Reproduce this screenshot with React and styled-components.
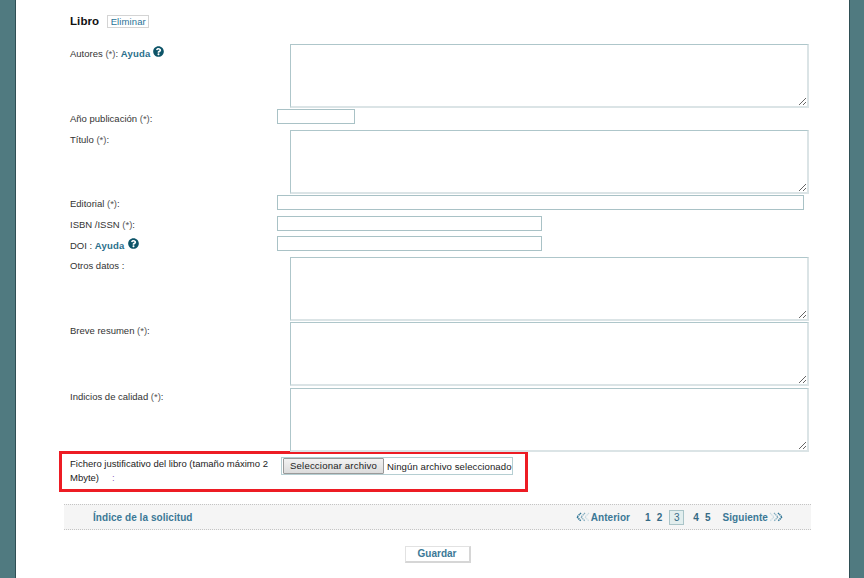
import React from "react";
import styled, { createGlobalStyle } from "styled-components";
import { FaQuestionCircle } from "react-icons/fa";

const Global = createGlobalStyle`
  html, body { margin: 0; padding: 0; height: 578px; overflow: hidden; background: #507a80; }
  body { font-family: "Liberation Sans", Arial, sans-serif; font-size: 10px; color: #333; }
  #root { height: 578px; }
`;

const Page = styled.div`
  box-sizing: border-box;
  width: 835px;
  height: 578px;
  margin-left: 15px;
  background: #fff;
  border-left: 1px solid #2f4f55;
  border-right: 1px solid #2f4f55;
  padding: 14px 38px 0 48px;
  overflow: hidden;
`;

const TitleRow = styled.div`
  display: flex;
  align-items: flex-start;
  gap: 8px;
  height: 30px;
  padding-left: 6px;
`;

const Title = styled.h2`
  margin: 0;
  font-size: 11.5px;
  line-height: 14px;
  font-weight: bold;
  letter-spacing: 0.1px;
  color: #111;
`;

const Remove = styled.button`
  box-sizing: border-box;
  height: 13px;
  width: 42px;
  margin-top: 1px;
  padding: 0;
  font: 9.5px/11px "Liberation Sans", Arial, sans-serif;
  letter-spacing: 0.1px;
  color: #2a7398;
  background: #fff;
  border: 1px solid #d4d4d4;
`;

const Row = styled.div`
  display: flex;
  align-items: flex-start;
  height: ${(p) => p.$h}px;
  padding-left: 6px;
`;

const Label = styled.label`
  box-sizing: border-box;
  flex: 0 0 207px;
  padding-top: ${(p) => p.$top ?? 3}px;
  font-size: 9.5px;
  line-height: 12px;
  color: #333;
`;

const Star = styled.span`
  color: #555;
`;

const Help = styled.a`
  font-weight: bold;
  color: #2a6f8c;
  letter-spacing: 0.2px;
  svg {
    width: 11px;
    height: 11px;
    margin-left: 3px;
    color: #0d5468;
    vertical-align: 0;
  }
`;

const Area = styled.textarea`
  box-sizing: border-box;
  display: block;
  width: 519px;
  height: 64px;
  margin: 0 0 0 13px;
  padding: 1px;
  background: #fff;
  border-style: solid;
  border-width: 1px 2px 2px 1px;
  border-color: #aec6ca #dbe4e6 #dbe4e6 #aec6ca;
  outline: none;
`;

const Field = styled.input`
  box-sizing: border-box;
  display: block;
  width: ${(p) => p.$w}px;
  height: 15px;
  margin: 0;
  padding: 0 1px;
  background: #fff;
  border: 1px solid #a9c2c6;
  outline: none;
`;

const FileRow = styled.div`
  box-sizing: border-box;
  display: flex;
  align-items: flex-start;
  width: 469px;
  height: 41px;
  margin-left: -5px;
  padding: 3px 0 0 8px;
  border: 3px solid #ed1c24;
`;

const FileLabel = styled.div`
  flex: 0 0 211px;
  box-sizing: border-box;
  padding-right: 8px;
  font-size: 9.5px;
  line-height: 14px;
  color: #222;
`;

const Colon = styled.span`
  margin-left: 13px;
  color: #8a5fc0;
`;

const FileBox = styled.div`
  box-sizing: border-box;
  display: flex;
  align-items: center;
  width: 232px;
  height: 18px;
  padding-left: 1px;
  white-space: nowrap;
  overflow: hidden;
  border: 1px solid #b5ced2;
`;

const FileButton = styled.button`
  box-sizing: border-box;
  flex: none;
  width: 101px;
  height: 16px;
  padding: 0;
  font: 9.6px/14px "Liberation Sans", Arial, sans-serif;
  letter-spacing: 0.17px;
  color: #222;
  background: linear-gradient(#f2f2f2, #dcdcdc);
  border: 1px solid #9a9a9a;
  border-radius: 1px;
`;

const FileName = styled.span`
  margin-left: 3px;
  font-size: 9.6px;
  letter-spacing: 0.07px;
  color: #222;
`;

const Bar = styled.nav`
  box-sizing: border-box;
  display: flex;
  align-items: center;
  justify-content: space-between;
  height: 26px;
  margin-top: 12px;
  padding: 0 28px 0 29px;
  background: #f5f5f5;
  border-top: 1px dotted #c4c4c4;
  border-bottom: 1px dotted #c4c4c4;
  font-size: 10px;
  font-weight: bold;
  letter-spacing: 0.05px;
  color: #3b7896;
`;

const Pager = styled.div`
  display: flex;
  align-items: center;
`;

const PagerLink = styled.a`
  display: flex;
  align-items: center;
  gap: 1px;
  margin: ${(p) => p.$m || "0"};
`;

const PageNum = styled.a`
  color: #356a85;
  margin: ${(p) => p.$m || "0"};
`;

const CurrentPage = styled.span`
  box-sizing: border-box;
  width: 15px;
  height: 15px;
  margin: 0 9px 0 7px;
  text-align: center;
  line-height: 14px;
  font-weight: normal;
  color: #356a85;
  background: #e2eeee;
  border: 1px solid #a9c4c8;
`;

const Actions = styled.div`
  display: flex;
  justify-content: center;
  margin-top: 16px;
`;

const Save = styled.button`
  box-sizing: border-box;
  width: 66px;
  height: 17px;
  padding: 0;
  font: bold 10px/14px "Liberation Sans", Arial, sans-serif;
  color: #3b7896;
  background: #fff;
  border: 1px solid #e2e2e2;
  border-bottom: 2px solid #d6d6d6;
  border-right: 2px solid #d6d6d6;
`;

const Chevrons = ({ flip }) => (
  <svg width="14" height="10" viewBox="0 0 14 10" style={{ transform: flip ? "scaleX(-1)" : "none" }}>
    <path d="M5 1 1 5l4 4" fill="none" stroke="#2f7595" strokeWidth="1.5" strokeDasharray="1.4 .5" />
    <path d="M9 1 5 5l4 4" fill="none" stroke="#7fa9bc" strokeWidth="1.3" strokeDasharray="1.4 .5" />
    <path d="M13 1 9 5l4 4" fill="none" stroke="#c6dae2" strokeWidth="1.2" strokeDasharray="1.4 .5" />
  </svg>
);

const req = <Star>(*)</Star>;

export default function App() {
  return (
    <>
      <Global />
      <Page>
        <TitleRow>
          <Title>Libro</Title>
          <Remove type="button">Eliminar</Remove>
        </TitleRow>

        <Row $h={65}>
          <Label $top={2}>Autores {req}: <Help>Ayuda<FaQuestionCircle /></Help></Label>
          <Area />
        </Row>
        <Row $h={21}>
          <Label $top={4}>Año publicación {req}:</Label>
          <Field $w={78} />
        </Row>
        <Row $h={65}>
          <Label $top={4}>Título {req}:</Label>
          <Area />
        </Row>
        <Row $h={21}>
          <Label>Editorial {req}:</Label>
          <Field $w={527} />
        </Row>
        <Row $h={20}>
          <Label>ISBN /ISSN {req}:</Label>
          <Field $w={265} />
        </Row>
        <Row $h={21}>
          <Label $top={2}>DOI : <Help>Ayuda<FaQuestionCircle /></Help></Label>
          <Field $w={265} />
        </Row>
        <Row $h={65}>
          <Label>Otros datos :</Label>
          <Area />
        </Row>
        <Row $h={66}>
          <Label>Breve resumen {req}:</Label>
          <Area />
        </Row>
        <Row $h={63}>
          <Label>Indicios de calidad {req}:</Label>
          <Area />
        </Row>

        <FileRow>
          <FileLabel>Fichero justificativo del libro (tamaño máximo 2 Mbyte)<Colon>:</Colon></FileLabel>
          <FileBox>
            <FileButton type="button">Seleccionar archivo</FileButton>
            <FileName>Ningún archivo seleccionado</FileName>
          </FileBox>
        </FileRow>

        <Bar>
          <a>Índice de la solicitud</a>
          <Pager>
            <PagerLink $m="0 15px 0 0"><Chevrons />Anterior</PagerLink>
            <PageNum $m="0 6px 0 0">1</PageNum>
            <PageNum>2</PageNum>
            <CurrentPage>3</CurrentPage>
            <PageNum $m="0 6px 0 0">4</PageNum>
            <PageNum>5</PageNum>
            <PagerLink $m="0 0 0 12px">Siguiente<Chevrons flip /></PagerLink>
          </Pager>
        </Bar>

        <Actions>
          <Save type="button">Guardar</Save>
        </Actions>
      </Page>
    </>
  );
}
